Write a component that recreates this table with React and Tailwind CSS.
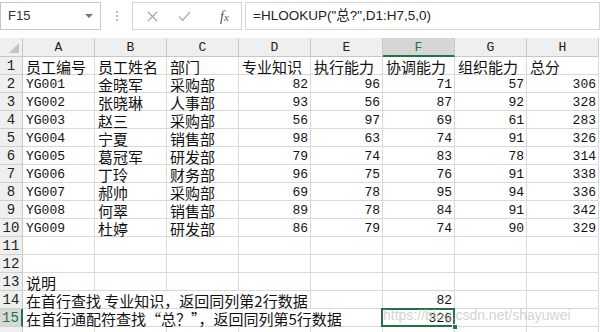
import { Fragment } from 'react';

const COLS = ['A', 'B', 'C', 'D', 'E', 'F', 'G', 'H'];

const DATA = [
    ['员工编号', '员工姓名', '部门', '专业知识', '执行能力', '协调能力', '组织能力', '总分'],
    ['YG001', '金晓军', '采购部', 82, 96, 71, 57, 306],
    ['YG002', '张晓琳', '人事部', 93, 56, 87, 92, 328],
    ['YG003', '赵三', '采购部', 56, 97, 69, 61, 283],
    ['YG004', '宁夏', '销售部', 98, 63, 74, 91, 326],
    ['YG005', '葛冠军', '研发部', 79, 74, 83, 78, 314],
    ['YG006', '丁玲', '财务部', 96, 75, 76, 91, 338],
    ['YG007', '郝帅', '采购部', 69, 78, 95, 94, 336],
    ['YG008', '何翠', '销售部', 89, 78, 84, 91, 342],
    ['YG009', '杜婷', '研发部', 86, 79, 74, 90, 329],
    [],
    [],
    ['说明'],
];

const cjk = "font-['Noto_Sans_CJK_SC',sans-serif] text-[15px] text-[#111]";
const mono = "font-['Liberation_Mono','Noto_Sans_CJK_SC',monospace] text-[13px] text-[#111]";

const cellBase = 'h-[18px] border-r border-b border-[#d9d9d9] flex items-center whitespace-nowrap leading-[17px] pt-[1px]';

const RowHead = ({ n, active }) => (
    <div
        className={`h-[18px] border-b border-[#d0d0d0] flex items-center justify-center leading-[17px] pt-[1px] font-['Liberation_Mono',monospace] text-[14px] ${
            active ? 'bg-[#d8d8d8] text-[#217346] border-r-2 border-r-[#217346]' : 'bg-[#efefef] text-[#222] border-r border-r-[#c8c8c8]'
        }`}
    >
        {n}
    </div>
);

const Cell = ({ v }) => {
    if (v === undefined || v === '') return <div className={cellBase} />;
    if (typeof v === 'number')
        return <div className={`${cellBase} ${mono} justify-end pr-[2px]`}>{v}</div>;
    const isLatin = /^[A-Za-z0-9]+$/.test(v);
    return <div className={`${cellBase} ${isLatin ? mono : cjk} pl-[3px]`}>{v}</div>;
};

const Toolbar = () => (
    <div className="h-[38px] flex items-start bg-white font-['Liberation_Sans',sans-serif]">
        <div className="mt-[2px] w-[101px] h-[28px] border border-[#c6c6c6] flex items-center justify-between pl-[7px] pr-[7px] text-[13px] text-[#333]">
            <span>F15</span>
            <span className="w-0 h-0 border-l-[4px] border-r-[4px] border-t-[4px] border-l-transparent border-r-transparent border-t-[#777]" />
        </div>
        <div className="w-[31px] h-[32px] flex flex-col items-center justify-center gap-[2px]">
            <span className="w-[2px] h-[2px] bg-[#bbb]" />
            <span className="w-[2px] h-[2px] bg-[#bbb]" />
            <span className="w-[2px] h-[2px] bg-[#bbb]" />
        </div>
        <div className="mt-[2px] w-[110px] h-[28px] border border-[#d4d4d4] flex items-center">
            <svg className="ml-[14px]" width="11" height="11" viewBox="0 0 11 11">
                <path d="M1 1L10 10M10 1L1 10" stroke="#a6a6a6" strokeWidth="1.2" />
            </svg>
            <svg className="ml-[20px]" width="13" height="11" viewBox="0 0 13 11">
                <path d="M1 5.5L4.5 9.5L12 1" stroke="#b0b0b0" strokeWidth="1.4" fill="none" />
            </svg>
            <span className="ml-[29px] font-['Liberation_Serif',serif] italic text-[14px] text-[#555]">
                f<span className="text-[11px]">x</span>
            </span>
        </div>
        <div className="mt-[2px] ml-[3px] flex-1 h-[28px] border border-[#d4d4d4] flex items-center pl-[7px] text-[13.5px] text-[#222] font-['Liberation_Sans','Noto_Sans_CJK_SC',sans-serif]">
            =HLOOKUP("总?",D1:H7,5,0)
        </div>
    </div>
);

export default function App() {
    return (
        <div className="w-[600px] h-[332px] overflow-hidden bg-white relative">
            <Toolbar />
            <div className="grid grid-cols-[23px_repeat(8,72px)]">
                {/* column headers */}
                <div className="h-[19px] bg-[#efefef] border-r border-b border-[#c8c8c8] relative">
                    <svg className="absolute right-[3px] bottom-[3px]" width="10" height="10" viewBox="0 0 10 10">
                        <path d="M10 0L10 10L0 10Z" fill="#c4c4c4" />
                    </svg>
                </div>
                {COLS.map(c => (
                    <div
                        key={c}
                        className={`h-[19px] flex items-center justify-center leading-[17px] pt-[1px] font-['Liberation_Mono',monospace] text-[13px] border-r border-[#c8c8c8] ${
                            c === 'F'
                                ? 'bg-[#d6d6d6] text-[#217346] border-b-2 border-b-[#217346]'
                                : 'bg-[#efefef] text-[#222] border-b border-b-[#c8c8c8]'
                        }`}
                    >
                        {c}
                    </div>
                ))}

                {DATA.map((row, i) => (
                    <Fragment key={i}>
                        <RowHead n={i + 1} />
                        {COLS.map((c, j) => (
                            <Cell key={c} v={row[j]} />
                        ))}
                    </Fragment>
                ))}

                {/* row 14 */}
                <RowHead n={14} />
                <div className={`${cellBase} ${cjk} col-span-4 pl-[3px]`}>在首行查找 专业知识，返回同列第2行数据</div>
                <Cell />
                <Cell v={82} />
                <Cell />
                <Cell />

                {/* row 15 */}
                <RowHead n={15} active />
                <div className={`${cellBase} ${cjk} col-span-5 pl-[3px]`}>在首行通配符查找“总？”，返回同列第5行数据</div>
                <div className={`${cellBase} ${mono} justify-end pr-[2px] relative`}>
                    326
                    <span className="absolute -left-[2px] -top-[1px] -right-[1px] -bottom-[1px] border-2 border-[#217346]" />
                    <span className="absolute -right-[4px] -bottom-[4px] w-[6px] h-[6px] bg-[#217346] border border-white" />
                </div>
                <Cell />
                <Cell />

                {/* row 16, only its top edge shows */}
                <RowHead n="" />
                {COLS.map(c => (
                    <Cell key={c} />
                ))}
            </div>
            <div className="absolute left-[383px] top-[305px] text-[14px] text-[#b4b4b4]/60 font-['Liberation_Sans',sans-serif] pointer-events-none">
                https://blog.csdn.net/shayuwei
            </div>
        </div>
    );
}
